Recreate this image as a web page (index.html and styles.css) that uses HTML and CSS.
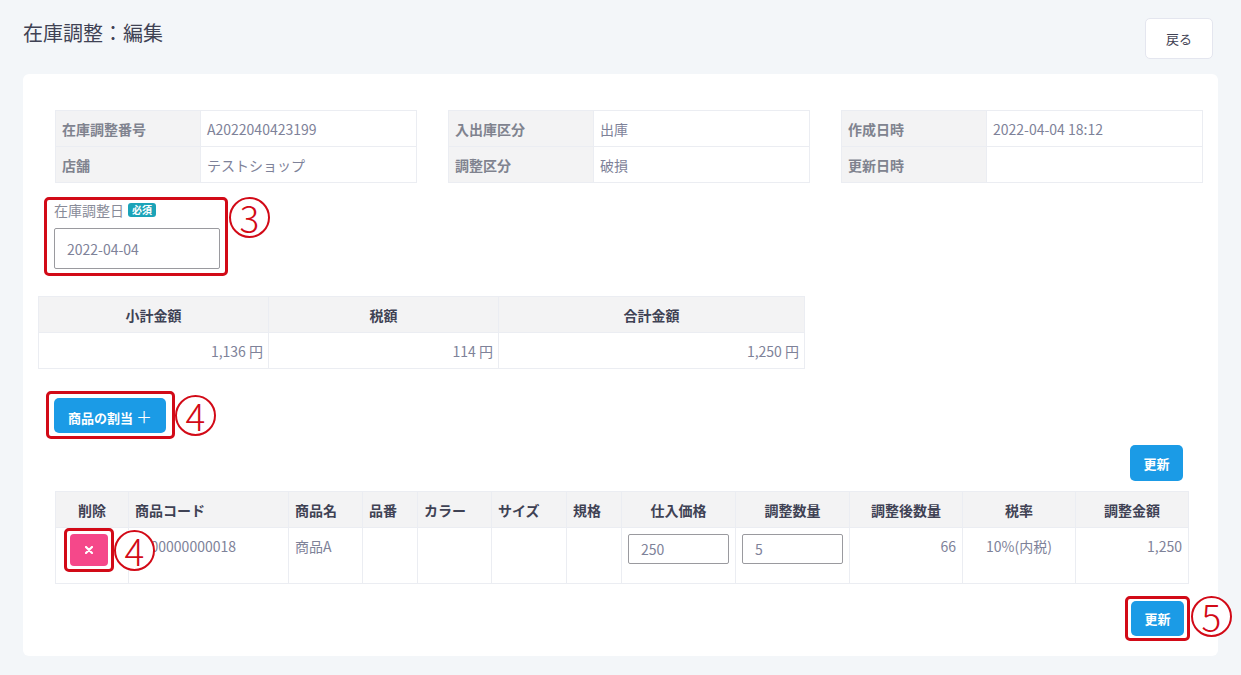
FILE: index.html
```html
<!DOCTYPE html>
<html lang="ja">
<head>
<meta charset="utf-8">
<title>在庫調整：編集</title>
<link rel="stylesheet" href="styles.css">
</head>
<body>
<div class="page">
  <header class="page-head">
    <h1 class="page-title">在庫調整：編集</h1>
    <button class="btn-back" type="button">戻る</button>
  </header>

  <main class="card">
    <div class="info-grid">
      <table class="info">
        <tr><th>在庫調整番号</th><td>A2022040423199</td></tr>
        <tr><th>店舗</th><td>テストショップ</td></tr>
      </table>
      <table class="info">
        <tr><th>入出庫区分</th><td>出庫</td></tr>
        <tr><th>調整区分</th><td>破損</td></tr>
      </table>
      <table class="info">
        <tr><th>作成日時</th><td>2022-04-04 18:12</td></tr>
        <tr><th>更新日時</th><td></td></tr>
      </table>
    </div>

    <div class="date-row">
      <div class="mark mark-date">
        <div class="field-label">在庫調整日 <span class="badge">必須</span></div>
        <input class="date-input" type="text" value="2022-04-04">
        <span class="num num-top">3</span>
      </div>
    </div>

    <table class="summary">
      <colgroup><col class="s1"><col class="s2"><col class="s3"></colgroup>
      <tr><th>小計金額</th><th>税額</th><th>合計金額</th></tr>
      <tr><td>1,136 円</td><td>114 円</td><td>1,250 円</td></tr>
    </table>

    <div class="assign-row">
      <div class="mark mark-assign">
        <button class="btn-blue btn-assign" type="button">商品の割当 <span class="plus">＋</span></button>
        <span class="num num-assign">4</span>
      </div>
    </div>

    <div class="update-row">
      <button class="btn-blue btn-update" type="button">更新</button>
    </div>

    <table class="items">
      <colgroup>
        <col class="c-del"><col class="c-code"><col class="c-name"><col class="c-no"><col class="c-color"><col class="c-size"><col class="c-spec"><col class="c-price"><col class="c-qty"><col class="c-after"><col class="c-tax"><col class="c-amt">
      </colgroup>
      <thead>
        <tr>
          <th class="center">削除</th>
          <th>商品コード</th>
          <th>商品名</th>
          <th>品番</th>
          <th>カラー</th>
          <th>サイズ</th>
          <th>規格</th>
          <th class="center">仕入価格</th>
          <th class="center">調整数量</th>
          <th class="center">調整後数量</th>
          <th class="center">税率</th>
          <th class="center">調整金額</th>
        </tr>
      </thead>
      <tbody>
        <tr>
          <td class="del-cell">
            <div class="mark mark-del">
              <button class="btn-del" type="button" aria-label="削除">
                <svg width="8" height="8" viewBox="0 0 8 8"><path d="M1 1L7 7M7 1L1 7" stroke="#fff" stroke-width="2.2" stroke-linecap="round"/></svg>
              </button>
              <span class="num num-del">4</span>
            </div>
          </td>
          <td class="code-cell">0000000000018</td>
          <td>商品A</td>
          <td></td>
          <td></td>
          <td></td>
          <td></td>
          <td class="in-cell"><input class="cell-input" type="text" value="250"></td>
          <td class="in-cell"><input class="cell-input" type="text" value="5"></td>
          <td class="right">66</td>
          <td class="center">10%(内税)</td>
          <td class="right">1,250</td>
        </tr>
      </tbody>
    </table>

    <div class="bottom-row">
      <div class="mark mark-update">
        <button class="btn-blue btn-update btn-update-b" type="button">更新</button>
        <span class="num num-top">5</span>
      </div>
    </div>
  </main>
</div>
</body>
</html>
```

FILE: styles.css
```css
* { box-sizing: border-box; }

html, body {
  margin: 0;
  padding: 0;
  background: #f3f6f9;
  font-family: "Noto Sans CJK JP", "Noto Sans", sans-serif;
  color: #7e8299;
}

.page {
  padding: 0 23px;
  min-height: 675px;
}

.page-head {
  height: 74px;
  display: flex;
  justify-content: space-between;
  align-items: flex-start;
}

.page-title {
  margin: 19px 0 0;
  font-size: 20px;
  line-height: 28px;
  font-weight: 400;
  color: #3f4254;
}

.btn-back {
  margin: 18px 5px 0 0;
  width: 68px;
  height: 41px;
  background: #fff;
  border: 1px solid #e4e6ef;
  border-radius: 5px;
  font-family: inherit;
  font-size: 13px;
  color: #3f4254;
  padding: 0;
}

.card {
  background: #fff;
  border-radius: 6px;
  padding: 36px 15px 15px;
}

/* info tables */
.info-grid {
  margin-left: 17px;
  display: grid;
  grid-template-columns: repeat(3, 1fr);
  column-gap: 31px;
}

.info {
  width: 100%;
  border-collapse: collapse;
  font-size: 14px;
}
.info tr { height: 36px; }
.info th, .info td {
  border: 1px solid #ebedf2;
  padding: 0 6px;
  text-align: left;
  vertical-align: middle;
}
.info th {
  width: 145px;
  background: #f3f3f4;
  font-weight: 700;
  color: #80838f;
}
.info td {
  color: #7e8299;
  font-weight: 400;
}

/* annotation marks */
.mark {
  position: relative;
  border: 3px solid #d20a17;
  border-radius: 5px;
  display: inline-block;
}

.num {
  position: absolute;
  width: 41px;
  height: 41px;
  border: 2px solid #d20a17;
  border-radius: 50%;
  background: #fff;
  color: #d20a17;
  font-size: 37px;
  line-height: 37px;
  text-align: center;
  font-weight: 300;
}
.num-top { left: calc(100% + 4px); top: -3px; }
.num-assign { left: calc(100% + 3px); top: 1px; }
.num-del { left: calc(100% + 3px); top: -1px; }

/* date field */
.date-row {
  margin: 14px 0 0 6px;
}
.mark-date {
  padding: 0 5px 4px 7px;
}
.field-label {
  font-size: 14px;
  line-height: 20px;
  color: #888b98;
  margin-bottom: 8px;
  display: flex;
  align-items: center;
  gap: 4px;
}
.badge {
  display: inline-block;
  background: #1ba3b8;
  color: #fff;
  font-size: 10px;
  font-weight: 700;
  line-height: 14px;
  height: 14px;
  padding: 0 4px;
  border-radius: 3px;
}
.date-input {
  display: block;
  width: 166px;
  height: 41px;
  border: 1px solid #9a9a9f;
  border-radius: 2px;
  padding: 0 12px;
  font-family: inherit;
  font-size: 14px;
  color: #7e8299;
  margin: 0;
}

/* summary */
.summary {
  margin-top: 20px;
  width: 766px;
  border-collapse: collapse;
  table-layout: fixed;
  font-size: 14px;
}
.summary .s1, .summary .s2 { width: 230px; }
.summary .s3 { width: 306px; }
.summary tr { height: 36px; }
.summary th, .summary td {
  border: 1px solid #ebedf2;
  padding: 0 6px;
}
.summary th {
  background: #f3f3f4;
  color: #3f4254;
  font-weight: 700;
  text-align: center;
}
.summary td {
  text-align: right;
  color: #7e8299;
  padding-right: 5px;
}

/* buttons */
.btn-blue {
  background: #1b9be6;
  color: #fff;
  border: 0;
  border-radius: 5px;
  font-family: inherit;
  font-weight: 700;
  font-size: 13px;
  padding: 0;
}

.assign-row {
  margin: 22px 0 0 8px;
}
.mark-assign {
  padding: 4px 6px 3px 5px;
}
.btn-assign {
  display: block;
  width: 112px;
  height: 35px;
}
.plus {
  font-weight: 400;
  font-size: 16px;
}

.update-row {
  margin: 6px 20px 0 0;
  display: flex;
  justify-content: flex-end;
}
.btn-update {
  display: block;
  width: 53px;
  height: 36px;
}
.btn-update-b {
  height: 35px;
}

/* items table */
.items {
  margin: 10px 0 0 17px;
  width: 1133px;
  border-collapse: collapse;
  table-layout: fixed;
  font-size: 14px;
}
.c-del { width: 73px; }
.c-code { width: 160px; }
.c-name { width: 74px; }
.c-no { width: 55px; }
.c-color { width: 74px; }
.c-size { width: 75px; }
.c-spec { width: 55px; }
.c-price, .c-qty { width: 114px; }
.c-after, .c-tax, .c-amt { width: 113px; }

.items th, .items td {
  border: 1px solid #ebedf2;
  padding: 0 6px;
  text-align: left;
}
.items thead tr { height: 36px; }
.items th {
  background: #f3f3f4;
  color: #3f4254;
  font-weight: 700;
  white-space: nowrap;
}
.items tbody tr { height: 56px; }
.items td {
  vertical-align: top;
  padding-top: 8px;
  color: #7e8299;
  line-height: 21px;
  white-space: nowrap;
  overflow: visible;
}
.items .center { text-align: center; }
.items .right { text-align: right; }

.items td.del-cell {
  padding: 0 0 0 8px;
  position: relative;
  z-index: 1;
}
.mark-del {
  padding: 3px;
  display: block;
  width: 50px;
}
.btn-del {
  display: flex;
  align-items: center;
  justify-content: center;
  width: 38px;
  height: 32px;
  background: #f5488a;
  border: 0;
  border-radius: 4px;
  padding: 0;
}

.items td.in-cell {
  padding-top: 6px;
}
.cell-input {
  display: block;
  width: 101px;
  height: 30px;
  border: 1px solid #9a9a9f;
  border-radius: 2px;
  padding: 0 12px;
  font-family: inherit;
  font-size: 14px;
  color: #7e8299;
  margin: 0;
}

.bottom-row {
  margin: 12px 13px 0 0;
  display: flex;
  justify-content: flex-end;
}
.mark-update {
  padding: 2px 3px;
}
```
